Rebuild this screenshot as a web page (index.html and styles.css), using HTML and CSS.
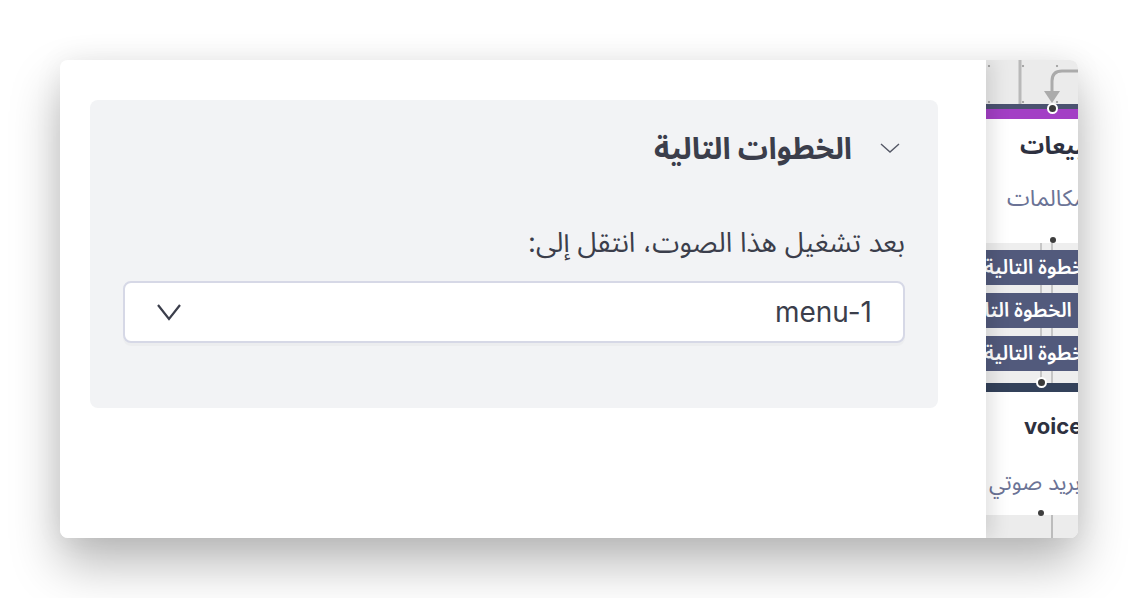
FILE: index.html
```html
<!DOCTYPE html>
<html lang="ar">
<head>
  <meta charset="UTF-8" />
  <title>الخطوات التالية</title>
  <link rel="stylesheet" href="styles.css">
</head>
<body>
  <div class="window">
    <div class="panel">
      <div class="card" dir="rtl">
        <div class="card-head">
          <svg class="head-chevron" width="20" height="10" viewBox="0 0 20 10">
            <path d="M1 1 L10 9 L19 1" fill="none" stroke="#555866" stroke-width="1.4"/>
          </svg>
          <h2 class="card-title">الخطوات التالية</h2>
        </div>
        <div class="field">
          <div class="field-label">بعد تشغيل هذا الصوت، انتقل إلى:</div>
          <div class="select">
            <span class="select-value">menu-1</span>
            <svg class="select-chevron" width="26" height="18" viewBox="0 0 26 18">
              <path d="M2 2 L13 16 L24 2" fill="none" stroke="#3b3e4b" stroke-width="2.2"/>
            </svg>
          </div>
        </div>
      </div>
    </div>

    <div class="canvas">
      <div class="grid-top">
        <svg width="92" height="44" viewBox="0 0 92 44">
          <line x1="34" y1="0" x2="34" y2="44" stroke="#b9b9b9" stroke-width="3"/>
          <path d="M92 11 L76 11 Q66 11 66 21 L66 32" fill="none" stroke="#ababab" stroke-width="3"/>
          <path d="M58 31 L74 31 L66 43 Z" fill="#ababab"/>
        </svg>
      </div>

      <div class="node node-sales">
        <span class="port port-in"></span>
        <div class="node-title pad-sales">المبيعات</div>
        <div class="node-sub pad-calls">المكالمات</div>
        <span class="dot"></span>
      </div>

      <div class="links">
        <div class="link-btn pad-b1">الخطوة التالية</div>
        <div class="link-btn pad-b2">الخطوة التالية</div>
        <div class="link-btn pad-b1">الخطوة التالية</div>
      </div>

      <div class="node node-voice">
        <span class="port port-voice"></span>
        <div class="node-title pad-voice">voicemail</div>
        <div class="node-sub pad-mail">بريد صوتي</div>
        <span class="dot dot-voice"></span>
      </div>

      <div class="grid-bottom"></div>
    </div>
  </div>
</body>
</html>
```

FILE: styles.css
```css
body {
  margin: 0;
  padding: 60px 0 60px 60px;
  background: #fff;
  font-family: Inter, "Noto Sans Arabic", "DejaVu Sans", sans-serif;
  color: #3b3e4b;
}
.window {
  width: 1018px;
  height: 478px;
  display: flex;
  border-radius: 8px;
  overflow: hidden;
  box-shadow: 0 26px 50px rgba(0,0,0,0.28), 0 0 30px rgba(0,0,0,0.06);
}
.panel {
  width: 926px;
  flex: none;
  box-sizing: border-box;
  padding: 40px 48px 0 30px;
  background: #fff;
  position: relative;
  z-index: 1;
  box-shadow: 6px 0 18px rgba(0,0,0,0.12);
}
.card {
  background: #f2f3f5;
  border-radius: 8px;
  padding: 32px 33px 65px 33px;
}
.card-head {
  display: flex;
  align-items: center;
  gap: 28px;
  height: 32px;
  padding-right: 5px;
}
.card-title {
  margin: 0;
  font-size: 30px;
  font-weight: 700;
  line-height: 32px;
}
.field {
  margin-top: 64px;
}
.field-label {
  font-size: 27.5px;
  line-height: 28px;
  margin-bottom: 25px;
}
.select {
  height: 62px;
  box-sizing: border-box;
  border: 2px solid #d6d8e6;
  border-radius: 8px;
  background: #fff;
  display: flex;
  align-items: center;
  justify-content: space-between;
  padding: 0 31px 0 31px;
  box-shadow: 0 3px 0 rgba(0,0,0,0.025);
}
.select-value {
  font-size: 28px;
  color: #3b3e4b;
}
.select-chevron {
  display: block;
}

/* flow canvas on the right */
.canvas {
  flex: 1;
  overflow: hidden;
  background-color: #ebebeb;
  white-space: nowrap;
}
.grid-top {
  height: 44px;
  background-image: radial-gradient(circle, #a8a8a8 1px, transparent 1.6px);
  background-size: 34px 36px;
  background-position: -14px -12px;
}
.grid-top svg {
  display: block;
}
.node {
  position: relative;
  background: #fff;
  box-sizing: border-box;
}
.node-sales {
  border-top: 5px solid #4b5270;
  box-shadow: inset 0 10px 0 #a33fc5;
  height: 139px;
  padding-top: 22px;
}
.node-voice {
  border-top: 9px solid #33415a;
  height: 132px;
  padding-top: 1px;
}
.node-title {
  font-size: 24px;
  font-weight: 700;
  color: #2e3140;
  line-height: 30px;
}
.node-voice .node-title {
  font-size: 22px;
}
.node-sub {
  font-size: 23px;
  color: #6b7396;
  line-height: 30px;
  margin-top: 22px;
}
.pad-sales { padding-left: 34px; }
.pad-calls { padding-left: 21px; }
.pad-voice { padding-left: 38px; margin-top: 18px; }
.node-voice .pad-mail { padding-left: 3px; margin-top: 26px; font-size: 22px; }
.port {
  position: absolute;
  width: 7px;
  height: 7px;
  border-radius: 50%;
  background: #3a3a3a;
  border: 2px solid #fff;
}
.port-in {
  left: 61px;
  top: -6px;
}
.port-voice {
  left: 50px;
  top: -15px;
}
.dot {
  position: absolute;
  left: 64px;
  bottom: 0;
  width: 6px;
  height: 6px;
  border-radius: 50%;
  background: #3d3d3d;
}
.dot-voice {
  left: 52px;
  bottom: -1px;
}
.links {
  height: 140px;
  box-sizing: border-box;
  padding-top: 7px;
  display: flex;
  flex-direction: column;
  gap: 8px;
  background:
    linear-gradient(#c6c6c6, #c6c6c6) 54px 0 / 2px 100% no-repeat,
    linear-gradient(#c6c6c6, #c6c6c6) 65px 0 / 2px 100% no-repeat,
    #eeeeee;
}
.link-btn {
  height: 35px;
  line-height: 35px;
  background: #525a7c;
  color: #fff;
  font-size: 20px;
  font-weight: 600;
}
.pad-b1 { margin-left: -2px; }
.pad-b2 { margin-left: -26px; }
.grid-bottom {
  height: 23px;
  background:
    linear-gradient(#bcbcbc, #bcbcbc) 65px 0 / 2px 100% no-repeat,
    #ececec;
}
```
